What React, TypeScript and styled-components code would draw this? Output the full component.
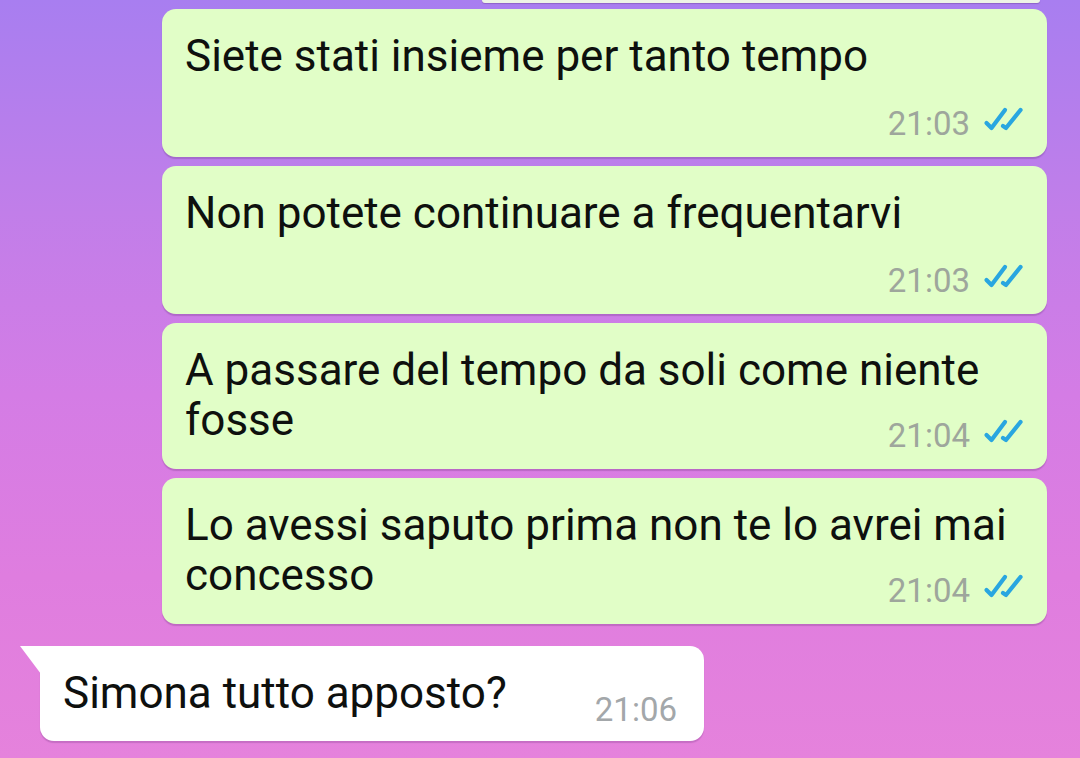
import React from "react";
import styled, { createGlobalStyle } from "styled-components";

const GlobalStyle = createGlobalStyle`
  html, body { margin: 0; padding: 0; }
  body { font-family: Roboto, "Noto Sans", "Liberation Sans", sans-serif; }
  * { box-sizing: border-box; }
`;

const Screen = styled.div`
  width: 1080px;
  height: 758px;
  overflow: hidden;
  display: flex;
  flex-direction: column;
  background: linear-gradient(
    180deg,
    #a87ef0 0%,
    #c17ee9 28%,
    #d47ce5 52%,
    #df7ddf 76%,
    #e582dc 100%
  );
`;

const TopRemnant = styled.div`
  align-self: flex-start;
  margin-left: 482px;
  width: 558px;
  height: 3px;
  background: #eef4e6;
  border-radius: 0 0 10px 10px;
  box-shadow: 0 1px 1px rgba(60, 20, 80, 0.25);
`;

const Thread = styled.div`
  display: flex;
  flex-direction: column;
  gap: 9px;
  padding-top: 6px;
  padding-right: 33px;
`;

const OutBubble = styled.div`
  align-self: flex-end;
  width: 885px;
  background: #e1fec7;
  border-radius: 14px;
  padding: 22px 24px 13px 23px;
  box-shadow: 0 1.5px 1px rgba(80, 30, 100, 0.22);
`;

const MessageLine = styled.div`
  font-size: 44px;
  line-height: 50px;
  color: #0e100e;
  white-space: nowrap;
`;

const FootRow = styled.div`
  display: flex;
  justify-content: space-between;
  align-items: flex-start;
`;

const Meta = styled.div<{ $offset: number }>`
  display: flex;
  justify-content: flex-end;
  align-items: flex-start;
  gap: 13px;
  height: 40px;
  margin-left: auto;
  margin-top: ${({ $offset }) => $offset}px;
`;

const Time = styled.span<{ $incoming?: boolean }>`
  font-size: 33px;
  line-height: 40px;
  color: ${({ $incoming }) => ($incoming ? "#a3a7aa" : "#9ea69c")};
`;

const Ticks = styled.svg`
  width: 40px;
  height: 24px;
  margin-top: 3px;
  flex: none;
`;

const InBubble = styled.div`
  position: relative;
  align-self: flex-start;
  margin-left: 40px;
  margin-top: 13px;
  width: 664px;
  background: #ffffff;
  border-radius: 0 14px 14px 14px;
  padding: 22px 27px 11px 23px;
  display: flex;
  justify-content: space-between;
  align-items: flex-start;
  box-shadow: 0 1.5px 1px rgba(80, 30, 100, 0.2);

  &::before {
    content: "";
    position: absolute;
    left: -20px;
    top: 0;
    width: 21px;
    height: 28px;
    background: #ffffff;
    clip-path: polygon(0 0, 100% 0, 100% 100%);
  }
`;

const InTime = styled(Time)`
  margin-top: 22px;
  height: 40px;
`;

const DoubleTick = () => (
  <Ticks viewBox="0 0 40 24" fill="none">
    <path
      d="M3.5 16 L8.5 21 L22 3"
      stroke="#29a6e0"
      strokeWidth="4.2"
      strokeLinecap="round"
      strokeLinejoin="round"
    />
    <path
      d="M20 19 L23 21 L37.5 3"
      stroke="#29a6e0"
      strokeWidth="4.2"
      strokeLinecap="round"
      strokeLinejoin="round"
    />
  </Ticks>
);

type OutMsg = { lines: string[]; time: string; inline: boolean };

const outgoing: OutMsg[] = [
  { lines: ["Siete stati insieme per tanto tempo"], time: "21:03", inline: false },
  { lines: ["Non potete continuare a frequentarvi"], time: "21:03", inline: false },
  { lines: ["A passare del tempo da soli come niente", "fosse"], time: "21:04", inline: true },
  { lines: ["Lo avessi saputo prima non te lo avrei mai", "concesso"], time: "21:04", inline: true },
];

export default function App() {
  return (
    <>
      <GlobalStyle />
      <Screen>
        <TopRemnant />
        <Thread>
          {outgoing.map((m, i) => {
            const head = m.inline ? m.lines.slice(0, -1) : m.lines;
            const last = m.inline ? m.lines[m.lines.length - 1] : null;
            return (
              <OutBubble key={i}>
                {head.map((l, j) => (
                  <MessageLine key={j}>{l}</MessageLine>
                ))}
                <FootRow>
                  {last && <MessageLine>{last}</MessageLine>}
                  <Meta $offset={last ? 21 : 23}>
                    <Time>{m.time}</Time>
                    <DoubleTick />
                  </Meta>
                </FootRow>
              </OutBubble>
            );
          })}
          <InBubble>
            <MessageLine>Simona tutto apposto?</MessageLine>
            <InTime $incoming>21:06</InTime>
          </InBubble>
        </Thread>
      </Screen>
    </>
  );
}
